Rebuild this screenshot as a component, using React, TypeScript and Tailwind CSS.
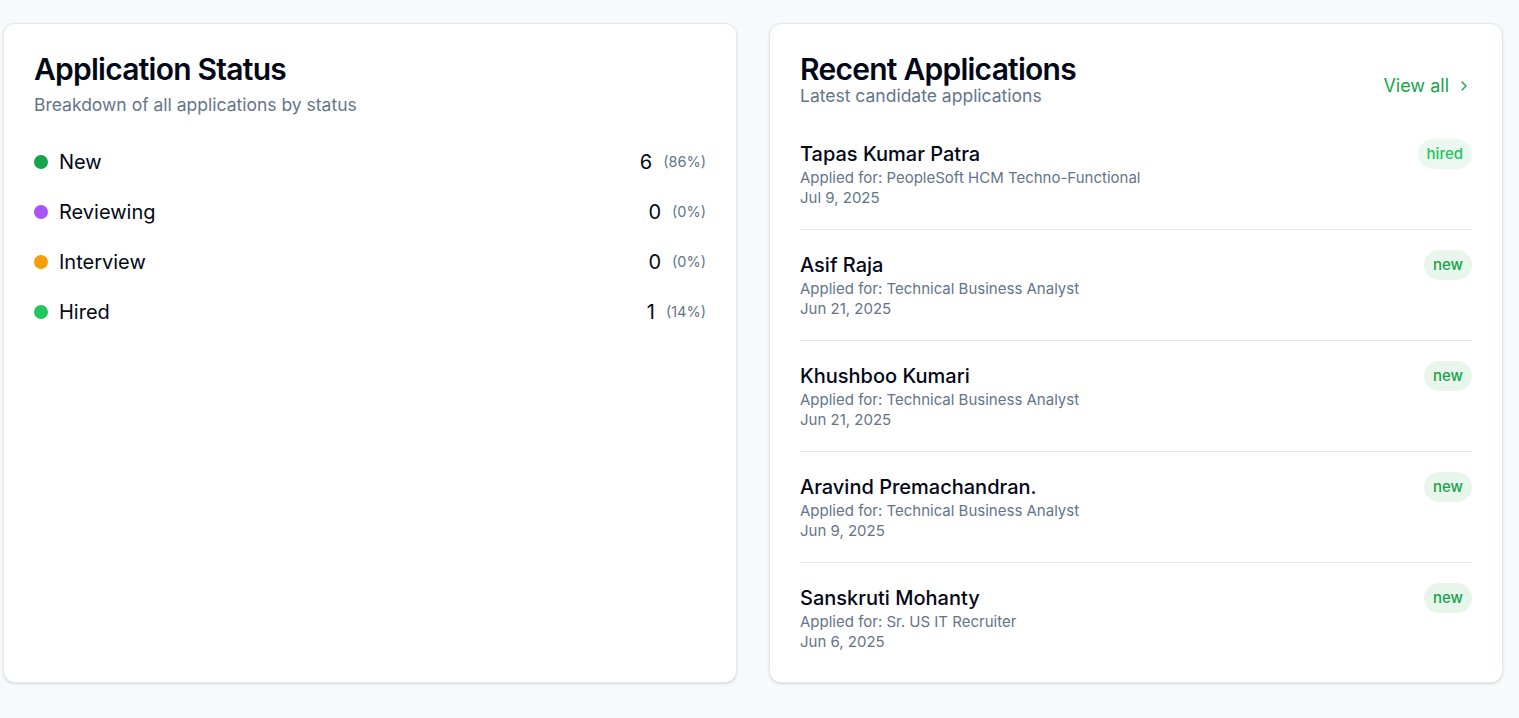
import React from 'react';
import { ChevronRight } from 'lucide-react';

type StatusRow = { label: string; count: number; pct: string; dot: string };
type Application = { name: string; role: string; date: string; status: 'hired' | 'new' };

const STATUSES: StatusRow[] = [
  { label: 'New', count: 6, pct: '86%', dot: 'bg-[#16a34a]' },
  { label: 'Reviewing', count: 0, pct: '0%', dot: 'bg-[#a855f7]' },
  { label: 'Interview', count: 0, pct: '0%', dot: 'bg-[#f59e0b]' },
  { label: 'Hired', count: 1, pct: '14%', dot: 'bg-[#22c55e]' },
];

const APPLICATIONS: Application[] = [
  { name: 'Tapas Kumar Patra', role: 'PeopleSoft HCM Techno-Functional', date: 'Jul 9, 2025', status: 'hired' },
  { name: 'Asif Raja', role: 'Technical Business Analyst', date: 'Jun 21, 2025', status: 'new' },
  { name: 'Khushboo Kumari', role: 'Technical Business Analyst', date: 'Jun 21, 2025', status: 'new' },
  { name: 'Aravind Premachandran.', role: 'Technical Business Analyst', date: 'Jun 9, 2025', status: 'new' },
  { name: 'Sanskruti Mohanty', role: 'Sr. US IT Recruiter', date: 'Jun 6, 2025', status: 'new' },
];

const StatusCard = () => (
  <div className="bg-white rounded-xl border border-[#e2e8f0] shadow-sm p-[30px]">
    <h2 className="text-3xl leading-none font-semibold tracking-tight text-[#020817]">Application Status</h2>
    <p className="mt-[9px] text-[17.5px] leading-6 text-[#64748b]">Breakdown of all applications by status</p>

    <div className="mt-5">
      {STATUSES.map((s) => (
        <div key={s.label} className="h-[50px] flex items-center justify-between">
          <div className="flex items-center gap-[11px]">
            <span className={`w-3.5 h-3.5 rounded-full ${s.dot}`} />
            <span className="text-xl text-[#020817]">{s.label}</span>
          </div>
          <div className="flex items-center gap-[11px]">
            <span className="text-xl text-[#020817]">{s.count}</span>
            <span className="text-[14.5px] text-[#64748b]">({s.pct})</span>
          </div>
        </div>
      ))}
    </div>
  </div>
);

const RecentCard = () => (
  <div className="bg-white rounded-xl border border-[#e2e8f0] shadow-sm p-[30px]">
    {/* Header */}
    <div className="flex items-start justify-between mb-[11px]">
      <div>
        <h2 className="text-3xl leading-none font-semibold tracking-tight text-[#020817]">Recent Applications</h2>
        <p className="text-[17.5px] leading-6 text-[#64748b]">Latest candidate applications</p>
      </div>
      <button className="mt-[18px] flex items-center gap-[7px] text-lg text-[#16a34a]">
        View all
        <ChevronRight size={16} strokeWidth={2} />
      </button>
    </div>

    {/* List */}
    <div>
      {APPLICATIONS.map((a, i) => (
        <div
          key={a.name}
          className={`flex items-start justify-between pt-[21px] ${
            i < APPLICATIONS.length - 1 ? 'pb-[21px] border-b border-[#e2e8f0]' : ''
          }`}
        >
          <div>
            <p className="text-xl leading-7 font-medium text-[#020817]">{a.name}</p>
            <p className="text-[15px] leading-5 text-[#64748b]">Applied for: {a.role}</p>
            <p className="text-[15px] leading-5 text-[#64748b]">{a.date}</p>
          </div>
          <span
            className={`-mt-[1px] h-[30px] px-[9px] flex items-center rounded-full text-[15px] font-medium ${
              a.status === 'hired' ? 'bg-[#eaf8ef] text-[#22c55e]' : 'bg-[#e7f5eb] text-[#16a34a]'
            }`}
          >
            {a.status}
          </span>
        </div>
      ))}
    </div>
  </div>
);

export default function App() {
  return (
    <div
      className="min-h-screen bg-[#f8f9fb] pt-[23px] pl-[3px] pr-[16px] pb-[34px]"
      style={{ fontFamily: 'Inter, "Noto Sans", sans-serif' }}
    >
      <div className="grid grid-cols-2 gap-[32px]">
        <StatusCard />
        <RecentCard />
      </div>
    </div>
  );
}
